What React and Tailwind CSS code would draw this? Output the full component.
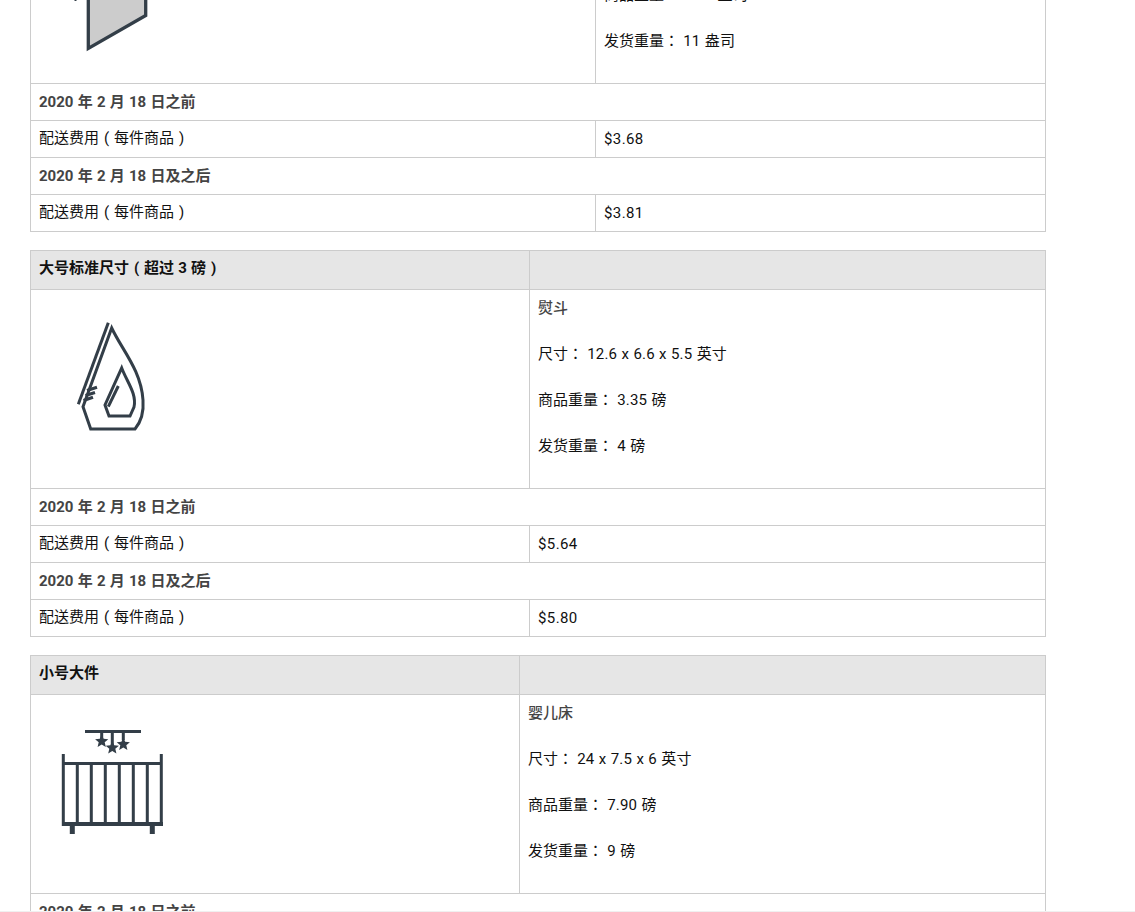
const FONT = "font-['Roboto','Noto_Sans_CJK_SC',sans-serif]";

// fullwidth colon sits centred in its box in the reference
function Colon() {
  return <span className="font-['Noto_Sans_CJK_TC',sans-serif]">：</span>;
}

function Paren({ children }) {
  return <span className="inline-block w-[15px] text-center">{children}</span>;
}

function PackageIcon() {
  return (
    <svg width="90" height="54" viewBox="0 0 90 54" className="absolute left-[40px] top-0" aria-hidden="true">
      <path d="M17.300 -6 V48.500 L74.700 15.500 V-6" fill="#cccccc" stroke="#333e48" strokeWidth="3.300" />
      <path d="M3.500 0 H5.500" stroke="#333e48" strokeWidth="2" />
    </svg>
  );
}

function IronIcon() {
  return (
    <svg width="110" height="130" viewBox="0 0 110 130" className="block" aria-hidden="true">
      <g fill="none" stroke="#333e48" strokeWidth="3">
        <path d="M48.300 12.700 L18.300 94.300" />
        <path d="M51.700 18 C62 40 81 60 83 90 C84 103 80 113 75 119 L30.700 119 L23 96.700 L51.700 18 Z" />
        <path d="M61.700 58 C67 72 77 84 74 97 L70 106 L49 106 L45 95 Z" />
        <path d="M58.300 76 L48.300 96.700" />
        <path d="M27 80.500 L37 77.300 M25.500 85.500 L35 82.500 M23.500 90.500 L33 87.300" strokeWidth="3.200" />
      </g>
    </svg>
  );
}

function CribIcon() {
  return (
    <svg width="125" height="125" viewBox="0 0 125 125" className="block" aria-hidden="true">
      <g stroke="#333e48" strokeWidth="3" fill="none">
        <path d="M35 11.500 H91 M51.700 11 V20 M62.300 11 V26 M73.300 11 V20" />
        <path d="M13.300 34 V106 M111.300 34 V106 M13 43.500 H112" />
        <path d="M27.300 44 V103 M41.300 44 V103 M55.300 44 V103 M69.300 44 V103 M83.300 44 V103 M97.300 44 V103" />
        <path d="M12 104 H113" strokeWidth="4" />
        <path d="M22.300 105 V114 M102.300 105 V114" strokeWidth="5" />
      </g>
      <g fill="#333e48">
        <path d="M51.700 14.500 l1.900 4.300 4.700 .4 -3.600 3.100 1.100 4.600 -4.100 -2.400 -4.100 2.400 1.100 -4.600 -3.600 -3.100 4.700 -.4 Z" />
        <path d="M62.300 21 l1.900 4.300 4.700 .4 -3.600 3.100 1.100 4.600 -4.100 -2.400 -4.100 2.400 1.100 -4.600 -3.600 -3.100 4.700 -.4 Z" />
        <path d="M73.300 17.500 l1.900 4.300 4.700 .4 -3.600 3.100 1.100 4.600 -4.100 -2.400 -4.100 2.400 1.100 -4.600 -3.600 -3.100 4.700 -.4 Z" />
      </g>
    </svg>
  );
}

function Spec({ label, value }) {
  return (
    <p className="mb-[26px] h-5 text-[#111]">
      {label}<Colon /> <span className="tracking-[0.15px]">{value}</span>
    </p>
  );
}

function PriceRows({ split, first, second }) {
  const rows = [
    ["2020 年 2 月 18 日之前", first],
    ["2020 年 2 月 18 日及之后", second],
  ];
  return rows.map(([label, price]) => (
    <div key={label}>
      <div className="h-[37px] border-b border-[#ccc] px-2 py-2 font-bold text-[#444]">{label}</div>
      <div className={`grid ${split} h-[37px] border-b border-[#ccc]`}>
        <div className="border-r border-[#ccc] px-2 py-[7px] text-[#111]">配送费用<Paren>(</Paren>每件商品<Paren>)</Paren></div>
        <div className="px-2 py-2 tracking-[0.4px] text-[#111]">{price}</div>
      </div>
    </div>
  ));
}

function SizeTable({ title, split, icon, iconClass, name, specs, first, second }) {
  return (
    <section className="mb-[18px] w-[1016px] border-x border-t border-[#ccc]">
      <div className={`grid ${split} h-[39px] border-b border-[#ccc] bg-[#e6e6e6] font-bold text-[#111]`}>
        <div className="border-r border-[#ccc] px-2 py-[7px]">{title}</div>
        <div />
      </div>
      <div className={`grid ${split} h-[199px] border-b border-[#ccc]`}>
        <div className={`border-r border-[#ccc] ${iconClass}`}>{icon}</div>
        <div className="px-2 py-2">
          <p className="mb-[25px] font-medium text-[#444]">{name}</p>
          {specs.map(([label, value]) => (
            <Spec key={label} label={label} value={value} />
          ))}
        </div>
      </div>
      <PriceRows split={split} first={first} second={second} />
    </section>
  );
}

export default function App() {
  return (
    <div className={`h-[912px] overflow-hidden border-b border-[#f0f0f0] bg-white pl-[30px] text-[15px] leading-5 [word-spacing:0.5px] ${FONT}`}>
      <section className="mb-[18px] w-[1016px] border-x border-[#ccc]">
        <div className="grid h-[84px] grid-cols-[565px_1fr] border-b border-[#ccc]">
          <div className="relative border-r border-[#ccc]"><PackageIcon /></div>
          <div className="overflow-hidden px-2">
            <div className="-mt-[16px]">
              <Spec label="商品重量" value="10.2 盎司" />
              <Spec label="发货重量" value="11 盎司" />
            </div>
          </div>
        </div>
        <PriceRows split="grid-cols-[565px_1fr]" first="$3.68" second="$3.81" />
      </section>

      <SizeTable
        title={<>大号标准尺寸<Paren>(</Paren>超过 3 磅<Paren>)</Paren></>}
        split="grid-cols-[499px_1fr]"
        icon={<IronIcon />}
        iconClass="pl-[29px] pt-[20px]"
        name="熨斗"
        specs={[["尺寸", "12.6 x 6.6 x 5.5 英寸"], ["商品重量", "3.35 磅"], ["发货重量", "4 磅"]]}
        first="$5.64"
        second="$5.80"
      />
      <SizeTable
        title="小号大件"
        split="grid-cols-[489px_1fr]"
        icon={<CribIcon />}
        iconClass="pl-[19px] pt-[25px]"
        name="婴儿床"
        specs={[["尺寸", "24 x 7.5 x 6 英寸"], ["商品重量", "7.90 磅"], ["发货重量", "9 磅"]]}
        first="$8.00"
        second="$8.26"
      />
    </div>
  );
}
